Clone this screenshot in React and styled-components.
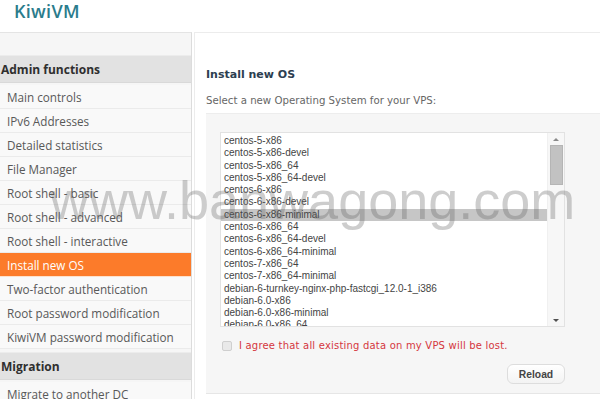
import React from "react";
import styled, { createGlobalStyle } from "styled-components";

const GlobalStyle = createGlobalStyle`
  html, body {
    margin: 0;
    padding: 0;
    background: #ffffff;
    overflow: hidden;
  }
`;

const osList = [
  "centos-5-x86",
  "centos-5-x86-devel",
  "centos-5-x86_64",
  "centos-5-x86_64-devel",
  "centos-6-x86",
  "centos-6-x86-devel",
  "centos-6-x86-minimal",
  "centos-6-x86_64",
  "centos-6-x86_64-devel",
  "centos-6-x86_64-minimal",
  "centos-7-x86_64",
  "centos-7-x86_64-minimal",
  "debian-6-turnkey-nginx-php-fastcgi_12.0-1_i386",
  "debian-6.0-x86",
  "debian-6.0-x86-minimal",
  "debian-6.0-x86_64",
];

const adminLinks = [
  "Main controls",
  "IPv6 Addresses",
  "Detailed statistics",
  "File Manager",
  "Root shell - basic",
  "Root shell - advanced",
  "Root shell - interactive",
  "Install new OS",
  "Two-factor authentication",
  "Root password modification",
  "KiwiVM password modification",
];

const App = () => {
  return (
    <Page>
      <GlobalStyle />
      <Header>
        <Logo>KiwiVM</Logo>
      </Header>
      <Body>
        <Sidebar>
          <GroupTitle>Admin functions</GroupTitle>
          {adminLinks.map((link) => (
            <NavItem key={link} $active={link === "Install new OS"}>
              {link}
            </NavItem>
          ))}
          <GroupTitle $spaced>Migration</GroupTitle>
          <NavItem>Migrate to another DC</NavItem>
        </Sidebar>
        <Main>
          <Title>Install new OS</Title>
          <Hint>Select a new Operating System for your VPS:</Hint>
          <Well>
            <ListBox>
              <Options>
                {osList.map((os) => (
                  <Option key={os} $selected={os === "centos-6-x86-minimal"}>
                    {os}
                  </Option>
                ))}
              </Options>
              <ScrollBar>
                <Arrow $up />
                <Thumb />
                <Track />
                <Arrow />
              </ScrollBar>
            </ListBox>
            <AgreeRow>
              <Check />
              <AgreeText>I agree that all existing data on my VPS will be lost.</AgreeText>
            </AgreeRow>
            <Actions>
              <Button>Reload</Button>
            </Actions>
          </Well>
        </Main>
      </Body>
      <Watermark>www.banwagong.com</Watermark>
    </Page>
  );
};

export default App;

const Page = styled.div`
  position: relative;
  width: 600px;
  height: 399px;
  overflow: hidden;
  background: #ffffff;
`;

const Header = styled.div`
  height: 32px;
  display: flex;
  align-items: flex-start;
  padding-left: 14px;
`;

const Logo = styled.div`
  font-family: "Open Sans", sans-serif;
  font-weight: 600;
  font-size: 18px;
  line-height: 22px;
  letter-spacing: 0.3px;
  color: #2b7c8c;
`;

const Body = styled.div`
  display: flex;
  align-items: stretch;
  height: 367px;
`;

const Sidebar = styled.div`
  width: 192px;
  flex-shrink: 0;
  background: #f6f6f6;
  border-top: 1px solid #e4e4e4;
  border-right: 1px solid #dcdcdc;
  padding-top: 22px;
  box-sizing: border-box;
`;

const GroupTitle = styled.div`
  height: 28px;
  line-height: 28px;
  padding-left: 1px;
  margin: ${(p) => (p.$spaced ? "3px 0 2px" : "0 0 2px")};
  background: #e2e2e2;
  border-top: 1px solid #ececec;
  border-bottom: 1px solid #d9d9d9;
  box-sizing: border-box;
  font-family: "Open Sans", sans-serif;
  font-weight: 700;
  font-size: 12px;
  color: #2f2f2f;
`;

const NavItem = styled.div`
  height: 24px;
  line-height: 24px;
  padding-left: 7px;
  box-sizing: border-box;
  background: ${(p) => (p.$active ? "#fc7b2a" : "#f9f9f9")};
  border-bottom: 1px solid ${(p) => (p.$active ? "#fde1cc" : "#ebebeb")};
  font-family: "Open Sans", sans-serif;
  font-size: 11.7px;
  color: ${(p) => (p.$active ? "#ffffff" : "#585858")};
  white-space: nowrap;
`;

const Main = styled.div`
  flex: 1;
  margin-left: 2px;
  border-left: 1px solid #ececec;
  border-top: 1px solid #ececec;
  padding: 35px 0 0 11px;
  display: flex;
  flex-direction: column;
  min-width: 0;
`;

const Title = styled.div`
  font-family: "DejaVu Sans", Verdana, sans-serif;
  font-weight: 700;
  font-size: 11px;
  line-height: 14px;
  color: #2c3e50;
`;

const Hint = styled.div`
  margin-top: 13px;
  font-family: "DejaVu Sans", Verdana, sans-serif;
  font-size: 10.2px;
  line-height: 12px;
  color: #666666;
`;

const Well = styled.div`
  margin-top: 6px;
  width: 420px;
  background: #f6f6f6;
  border-top: 1px solid #ededed;
  border-bottom: 1px solid #e6e6e6;
  padding: 18px 0 9px 14px;
  box-sizing: border-box;
`;

const ListBox = styled.div`
  width: 345px;
  height: 195px;
  background: #ffffff;
  border: 1px solid #e2e2e2;
  box-sizing: border-box;
  display: flex;
  overflow: hidden;
`;

const Options = styled.div`
  flex: 1;
  padding-top: 2px;
  overflow: hidden;
`;

const Option = styled.div`
  height: 12.3px;
  line-height: 12.3px;
  padding-left: 3px;
  background: ${(p) => (p.$selected ? "#c6c6c6" : "transparent")};
  font-family: "Liberation Sans", Arial, sans-serif;
  font-size: 10px;
  color: #444444;
  white-space: nowrap;
`;

const ScrollBar = styled.div`
  width: 16px;
  display: flex;
  flex-direction: column;
  align-items: center;
  background: #f7f7f7;
  border-left: 1px solid #f0f0f0;
`;

const Arrow = styled.div`
  height: 12px;
  width: 16px;
  display: flex;
  align-items: center;
  justify-content: center;
  &::after {
    content: "";
    border-left: 3px solid transparent;
    border-right: 3px solid transparent;
    ${(p) =>
      p.$up
        ? "border-bottom: 3px solid #8a8a8a;"
        : "border-top: 3px solid #505050;"}
  }
`;

const Thumb = styled.div`
  width: 13px;
  height: 40px;
  background: #c2c2c2;
  border: 1px solid #b5b5b5;
  box-sizing: border-box;
`;

const Track = styled.div`
  flex: 1;
`;

const AgreeRow = styled.div`
  display: flex;
  align-items: center;
  gap: 7px;
  margin-top: 12px;
  padding-left: 2px;
`;

const Check = styled.span`
  width: 10px;
  height: 10px;
  border: 1px solid #cfcfcf;
  border-radius: 2px;
  background: #e9e9e9;
  box-sizing: border-box;
`;

const AgreeText = styled.span`
  font-family: "DejaVu Sans", Verdana, sans-serif;
  font-size: 10px;
  letter-spacing: 0.2px;
  line-height: 14px;
  color: #d5363e;
`;

const Actions = styled.div`
  width: 345px;
  display: flex;
  justify-content: flex-end;
  margin-top: 11px;
`;

const Button = styled.button`
  width: 58px;
  height: 20px;
  background: linear-gradient(#ffffff, #f3f3f3);
  border: 1px solid #dddddd;
  border-radius: 6px;
  font-family: "Liberation Sans", Arial, sans-serif;
  font-weight: 700;
  font-size: 10.3px;
  color: #444444;
  padding: 0;
`;

const Watermark = styled.div`
  position: absolute;
  left: 50px;
  top: 173px;
  font-family: "Liberation Sans", Arial, sans-serif;
  font-size: 54px;
  line-height: 1;
  color: rgba(100, 100, 100, 0.32);
  white-space: nowrap;
  pointer-events: none;
`;
